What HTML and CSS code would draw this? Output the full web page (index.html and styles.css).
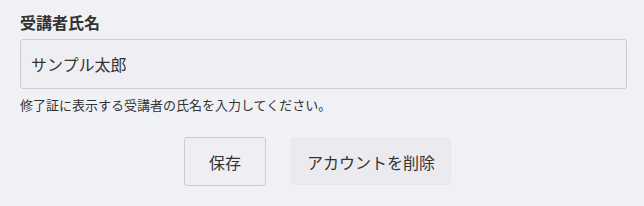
FILE: index.html
```html
<!DOCTYPE html>
<html lang="ja">
<head>
    <meta charset="UTF-8">
    <title>受講者氏名</title>
    <link rel="stylesheet" href="styles.css">
</head>
<body>
    <div class="form">
        <label class="label" for="name">受講者氏名</label>
        <input type="text" class="input" id="name" value="サンプル太郎">
        <div class="help">修了証に表示する受講者の氏名を入力してください。</div>

        <div class="actions">
            <button class="button button-save">保存</button>
            <button class="button button-delete">アカウントを削除</button>
        </div>
    </div>
</body>
</html>
```

FILE: styles.css
```css
body {
    margin: 0;
    background-color: #f0f1f5;
    font-family: "Noto Sans CJK JP", "Noto Sans", sans-serif;
    color: #333;
}

.form {
    padding: 10px 17px 0 20px;
}

.label {
    display: block;
    font-size: 16px;
    font-weight: bold;
    line-height: 24px;
    margin-bottom: 5px;
}

.input {
    display: block;
    width: 100%;
    height: 50px;
    box-sizing: border-box;
    padding: 0 10px;
    font-family: inherit;
    font-size: 16px;
    color: #333;
    background-color: #efeff3;
    border: 1px solid #cbccd2;
    border-radius: 3px;
}

.help {
    font-size: 13px;
    line-height: 20px;
    margin-top: 6px;
}

.actions {
    display: flex;
    justify-content: center;
    gap: 25px;
    padding-right: 12px;
    margin-top: 22px;
}

.button {
    font-family: inherit;
    font-size: 16px;
    color: #333;
    border-radius: 3px;
    cursor: pointer;
}

.button-save {
    height: 49px;
    padding: 0 24px;
    background-color: #efeff3;
    border: 1px solid #cbccd2;
}

.button-delete {
    height: 47px;
    margin-top: 1px;
    padding: 0 15px;
    background-color: #ebebef;
    border: 1px solid #e6e7eb;
}
```
